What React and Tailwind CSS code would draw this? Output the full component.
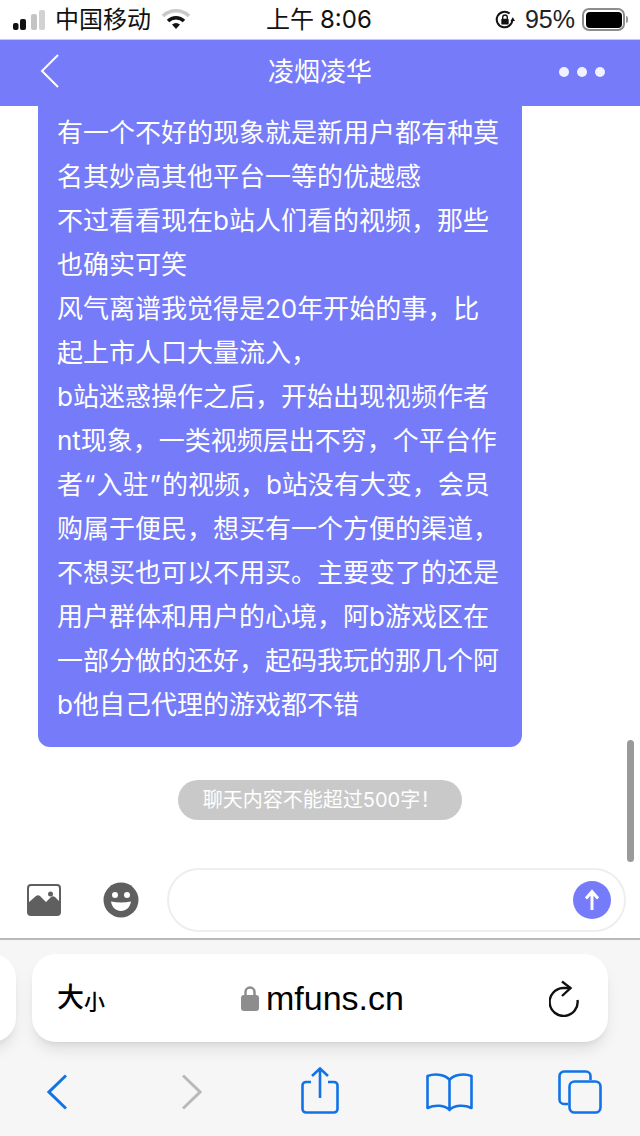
import React from 'react';

const lines = [
  '有一个不好的现象就是新用户都有种莫',
  '名其妙高其他平台一等的优越感',
  '不过看看现在b站人们看的视频，那些',
  '也确实可笑',
  '风气离谱我觉得是20年开始的事，比',
  '起上市人口大量流入，',
  'b站迷惑操作之后，开始出现视频作者',
  'nt现象，一类视频层出不穷，个平台作',
  <>者<span className="px-[1px]">“</span>入驻<span className="px-[1px]">”</span>的视频，b站没有大变，会员</>,
  '购属于便民，想买有一个方便的渠道，',
  '不想买也可以不用买。主要变了的还是',
  '用户群体和用户的心境，阿b游戏区在',
  '一部分做的还好，起码我玩的那几个阿',
  'b他自己代理的游戏都不错',
];

function StatusBar() {
  return (
    <div className="h-[40px] flex items-center bg-white text-[#111] pl-[13px] pr-[12px] border-b border-[#c9cbe0]">
      <svg width="33" height="22" viewBox="0 0 33 22">
        <rect x="0" y="14" width="5.500" height="7" rx="2" fill="#111" />
        <rect x="7" y="10" width="6" height="11" rx="2" fill="#111" />
        <rect x="18" y="5" width="6" height="16" rx="2" fill="#c4c4c4" />
        <rect x="26" y="1" width="6" height="20" rx="2" fill="#d2d2d2" />
      </svg>
      <span className="ml-[9px] text-[24px] leading-none">中国移动</span>
      <svg className="ml-[11px]" width="28" height="22" viewBox="0 0 28 22">
        <path d="M1 7 C8 0 20 0 27 7" fill="none" stroke="#c9c9c9" strokeWidth="3.5" />
        <path d="M6 12 C10.500 7.500 17.500 7.500 22 12" fill="none" stroke="#111" strokeWidth="3.500" />
        <path d="M10 15.500 C12.500 13.500 15.500 13.500 18 15.500 L14 20 Z" fill="#111" />
      </svg>
      <span className="ml-[76px] text-[24px] leading-none">上午</span>
      <span className="ml-[6px] text-[24px] leading-none font-[Inter,sans-serif]">8:06</span>
      <div className="ml-auto flex items-center">
        <svg width="22" height="22" viewBox="0 0 24 24">
          <path d="M20 12 A8.500 8.500 0 1 1 17 5" fill="none" stroke="#111" strokeWidth="2.200" />
          <path d="M18 13 L23 13 L20.500 9 Z" fill="#111" />
          <rect x="8" y="10.500" width="8" height="6.500" rx="1" fill="#111" />
          <path d="M9.500 11 V9 A2.500 2.500 0 0 1 14.500 9 V11" fill="none" stroke="#111" strokeWidth="1.500" />
        </svg>
        <span className="ml-[9px] text-[25px] leading-none text-[#222]">95%</span>
        <div className="ml-[7px] w-[43px] h-[23px] rounded-[7px] border-2 border-[#8d8d8d] p-[1.500px]">
          <div className="w-full h-full rounded-[4px] bg-black" />
        </div>
        <div className="w-[2px] h-[7px] bg-[#999] rounded-r-sm ml-[1px]" />
      </div>
    </div>
  );
}

function NavBar() {
  return (
    <div className="h-[66px] bg-[#757bf9] flex items-center justify-between pl-[40px] pr-[35px] text-white">
      <svg width="19" height="34" viewBox="0 0 19 34" className="mb-[5px]">
        <path d="M18 1 L2 17 L18 33" fill="none" stroke="#fff" strokeWidth="2" />
      </svg>
      <span className="text-[26px] leading-none ml-[22px] mb-[2px]">凌烟凌华</span>
      <div className="flex gap-[8px] mb-[3px]">
        <div className="w-[10px] h-[10px] rounded-full bg-[#f1f2ff]" />
        <div className="w-[10px] h-[10px] rounded-full bg-[#f1f2ff]" />
        <div className="w-[10px] h-[10px] rounded-full bg-[#f1f2ff]" />
      </div>
    </div>
  );
}

function InputRow() {
  return (
    <div className="h-[64px] mt-[48px] flex items-center pl-[27px] pr-[14px]">
      <svg width="34" height="32" viewBox="0 0 34 32">
        <rect x="1" y="1" width="32" height="30" rx="3" fill="#fff" stroke="#5f5f5f" strokeWidth="2" />
        <path d="M1 19 L9 12 Q11 10.500 13 12 L19 18 L24 13 Q26 11.500 28 13 L33 18 V28 A3 3 0 0 1 30 31 H4 A3 3 0 0 1 1 28 Z" fill="#5f5f5f" />
        <circle cx="23.500" cy="10" r="2.500" fill="#5f5f5f" />
      </svg>
      <svg className="ml-[42px]" width="36" height="36" viewBox="0 0 36 36">
        <circle cx="18" cy="18" r="17.500" fill="#5f5f5f" />
        <circle cx="12" cy="13" r="3" fill="#fff" />
        <circle cx="24" cy="13" r="3" fill="#fff" />
        <path d="M8 19.500 Q18 21.500 28 19.500 C27 25.500 23 29 18 29 C13 29 9 25.500 8 19.500 Z" fill="#fff" />
      </svg>
      <div className="ml-[28px] flex-1 h-[64px] rounded-full border-2 border-[#eeeeee] bg-white flex items-center justify-end pr-[13px]">
        <div className="w-[38px] h-[38px] rounded-full bg-[#757bf9] flex items-center justify-center">
          <svg width="18" height="22" viewBox="0 0 18 22">
            <path d="M9 21 V3 M3 9.500 L9 2.500 L15 9.500" fill="none" stroke="#fff" strokeWidth="3" />
          </svg>
        </div>
      </div>
    </div>
  );
}

function BrowserChrome() {
  return (
    <div className="mt-[6px] h-[198px] bg-[#f6f6f6] border-t-2 border-[#b9b9b9] overflow-hidden">
      <div className="mt-[14px] h-[88px] flex gap-[16px] -ml-[40px]">
        <div className="w-[56px] shrink-0 rounded-[24px] bg-white shadow-lg" />
        <div className="w-[576px] shrink-0 rounded-[24px] bg-white shadow-lg flex items-center pl-[25px] pr-[29px] text-black">
          <span className="text-[27px] leading-none font-medium">大</span>
          <span className="text-[21px] leading-none mt-[6px] font-medium">小</span>
          <svg className="ml-[136px]" width="18" height="26" viewBox="0 0 18 26">
            <path d="M4.500 12 V7 A4.500 4.500 0 0 1 13.500 7 V12" fill="none" stroke="#8d8d8d" strokeWidth="2.500" />
            <rect x="0" y="10" width="18" height="16" rx="3" fill="#8d8d8d" />
          </svg>
          <span className="ml-[7px] text-[34px] leading-none">mfuns.cn</span>
          <svg className="ml-auto" width="30" height="37" viewBox="0 0 30 37">
            <path d="M21.500 8 H14 A14 14 0 1 0 28.500 20" fill="none" stroke="#111" strokeWidth="2.400" />
            <path d="M13 1.500 L21.500 8 L13 16" fill="none" stroke="#111" strokeWidth="2.400" />
          </svg>
        </div>
      </div>
      <div className="h-[60px] mt-[20px] flex items-center pl-[47px]">
        <svg width="20" height="36" viewBox="0 0 20 36">
          <path d="M19 1.500 L2 18 L19 34.500" fill="none" stroke="#1273e6" strokeWidth="3" />
        </svg>
        <svg className="ml-[115px]" width="20" height="36" viewBox="0 0 20 36">
          <path d="M1 1.500 L18 18 L1 34.500" fill="none" stroke="#b9b9b9" strokeWidth="3" />
        </svg>
        <svg className="ml-[99px] mb-[3px]" width="38" height="47" viewBox="0 0 38 47">
          <path d="M19 31 V2 M11 9 L19 1.500 L27 9" fill="none" stroke="#1273e6" strokeWidth="2.600" />
          <path d="M10 15 H5 A3.500 3.500 0 0 0 1.500 18.500 V42 A3.500 3.500 0 0 0 5 45.500 H33 A3.500 3.500 0 0 0 36.500 42 V18.500 A3.500 3.500 0 0 0 33 15 H27" fill="none" stroke="#1273e6" strokeWidth="2.600" />
        </svg>
        <svg className="ml-[87px]" width="47" height="39" viewBox="0 0 47 39">
          <path d="M23.500 7 C20 2 10 0 1.500 3 V35 C9 31.500 19 32 23.500 37 C28 32 38 31.500 45.500 35 V3 C37 0 27 2 23.500 7 V37" fill="none" stroke="#1273e6" strokeWidth="2.600" strokeLinejoin="round" />
        </svg>
        <svg className="ml-[85px]" width="44" height="44" viewBox="0 0 44 44">
          <path d="M10 34 H6 A4.500 4.500 0 0 1 1.500 29.500 V6 A4.500 4.500 0 0 1 6 1.500 H28 A4.500 4.500 0 0 1 32.500 6 V10" fill="none" stroke="#1273e6" strokeWidth="2.600" />
          <rect x="11.500" y="11.500" width="31" height="31" rx="5" fill="none" stroke="#1273e6" strokeWidth="2.600" />
        </svg>
      </div>
    </div>
  );
}

export default function App() {
  return (
    <div className="relative w-[640px] h-[1136px] bg-white overflow-hidden font-['Liberation_Sans','Noto_Sans_CJK_SC',sans-serif]">
      <StatusBar />
      <NavBar />
      <div className="ml-[38px] w-[484px] h-[641px] bg-[#757bf9] rounded-b-[12px] pl-[19px] pt-[5px] text-white text-[26px] leading-[44px] font-[Inter,'Noto_Sans_CJK_SC',sans-serif]">
        {lines.map((line, i) => (
          <div key={i} className="whitespace-nowrap">{line}</div>
        ))}
      </div>
      <div className="mt-[33px] ml-[178px] w-[284px] h-[40px] rounded-full bg-[#c9c9c9] text-white text-[20px] pl-[3px] flex items-center justify-center font-[Inter,'Noto_Sans_CJK_SC',sans-serif]">
        聊天内容不能超过500字！
      </div>
      <InputRow />
      <BrowserChrome />
      <div className="absolute left-[627px] top-[740px] w-[7px] h-[122px] rounded-sm bg-[#9a9a9a]" />
    </div>
  );
}
